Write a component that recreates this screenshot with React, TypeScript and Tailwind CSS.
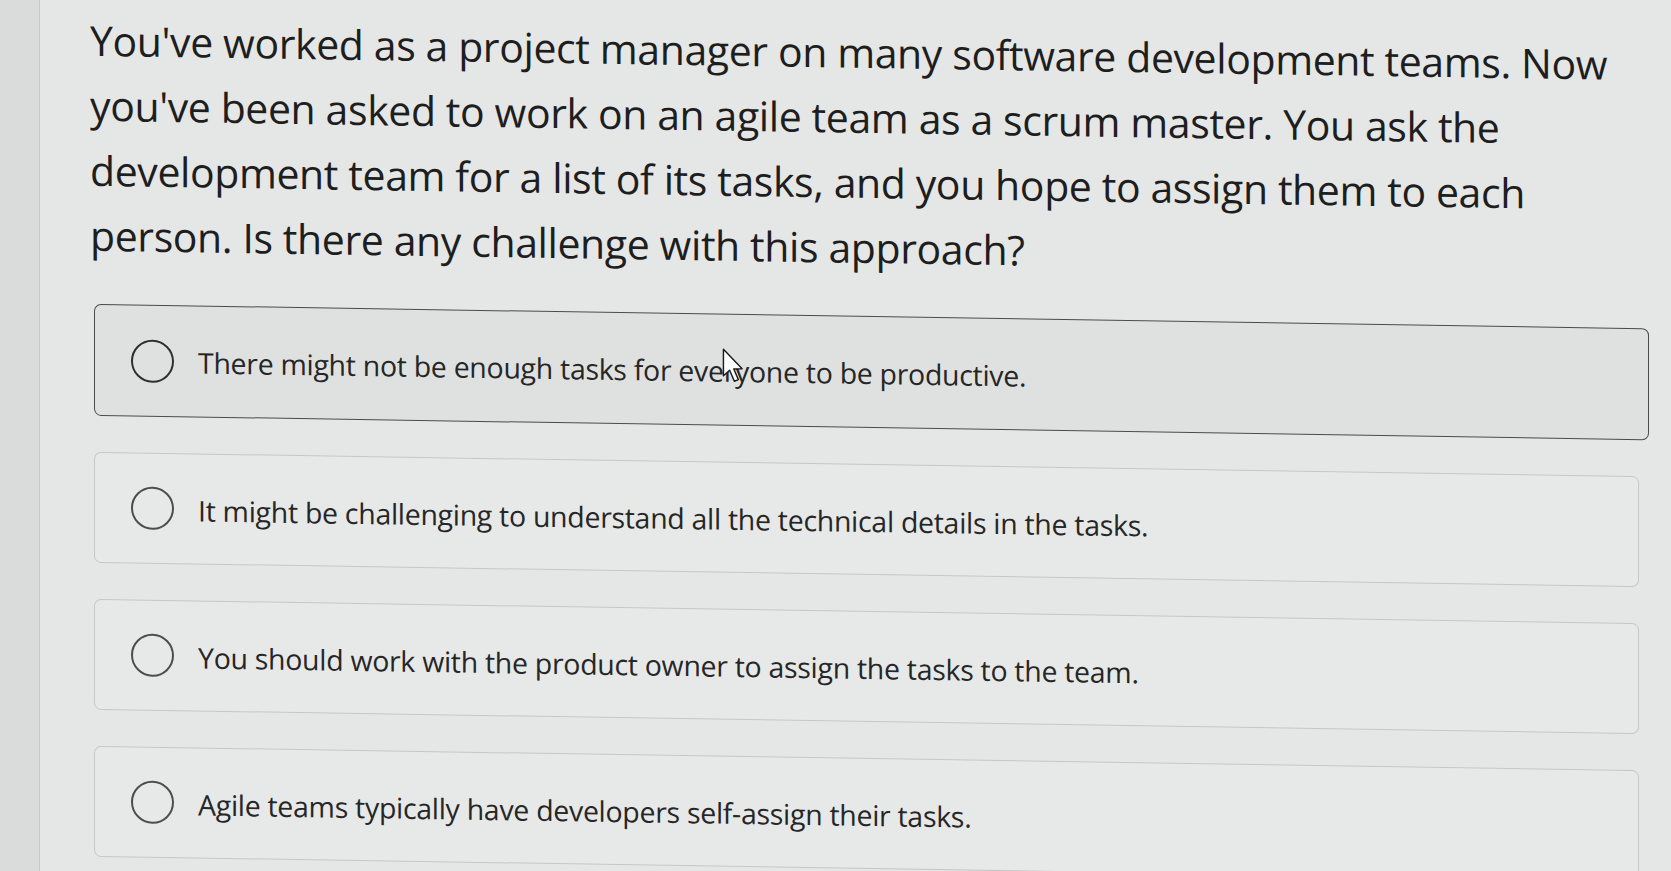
import React from "react";

function Cursor() {
  return (
    <svg
      className="absolute left-[-2px] top-[-4px]"
      width="23"
      height="36"
      viewBox="0 0 16 25"
      fill="none"
    >
      <path
        d="M1 1 L1 19.5 L5.3 15.6 L8.6 23.2 L11.4 22 L8.2 14.6 L14 14.4 Z"
        fill="#ffffff"
        stroke="#1a1a1a"
        strokeWidth="1"
        strokeLinejoin="round"
      />
    </svg>
  );
}

function Option({
  children,
  active,
}: {
  children: React.ReactNode;
  active?: boolean;
}) {
  return (
    <div
      className={
        active
          ? "flex h-[112px] w-[1555px] items-center rounded-[7px] border-[1.5px] border-[#4a4b4b] bg-[#dfe1e0] pl-[36px]"
          : "flex h-[111px] w-[1545px] items-center rounded-[7px] border border-[#c5c8c7] bg-[#e7e9e8] pl-[36px]"
      }
    >
      <div
        className={
          active
            ? "h-[43px] w-[43px] shrink-0 rounded-full border-2 border-[#2f2f2f]"
            : "h-[43px] w-[43px] shrink-0 rounded-full border-2 border-[#4d4d4d]"
        }
      />
      <div className="ml-[24px] pt-[3px] text-[28.5px] leading-none tracking-[-0.3px] text-[#262626]">
        {children}
      </div>
    </div>
  );
}

export default function App() {
  return (
    <div className="flex min-h-[871px] w-full overflow-hidden bg-[#e5e7e6] font-['Open_Sans','Noto_Sans',sans-serif]">
      <div className="w-[40px] shrink-0 border-r border-[#c8cac9] bg-[#dadcdb]" />
      <div className="origin-top-left skew-y-[0.9deg] pl-[50px] pt-[7px]">
        <p className="w-[1560px] text-[41px] leading-[65px] tracking-[-0.4px] text-[#1e1e1e]">
          You've worked as a project manager on many software development teams. Now
          <br />
          you've been asked to work on an agile team as a scrum master. You ask the
          <br />
          development team for a list of its tasks, and you hope to assign them to each
          <br />
          person. Is there any challenge with this approach?
        </p>
        <div className="ml-[4px] mt-[36px] flex flex-col gap-[36px]">
          <Option active>
            There might not be enough tasks for eve
            <span className="relative">
              r
              <Cursor />
            </span>
            yone to be productive.
          </Option>
          <Option>
            It might be challenging to understand all the technical details in the tasks.
          </Option>
          <Option>
            You should work with the product owner to assign the tasks to the team.
          </Option>
          <Option>Agile teams typically have developers self-assign their tasks.</Option>
        </div>
      </div>
    </div>
  );
}
